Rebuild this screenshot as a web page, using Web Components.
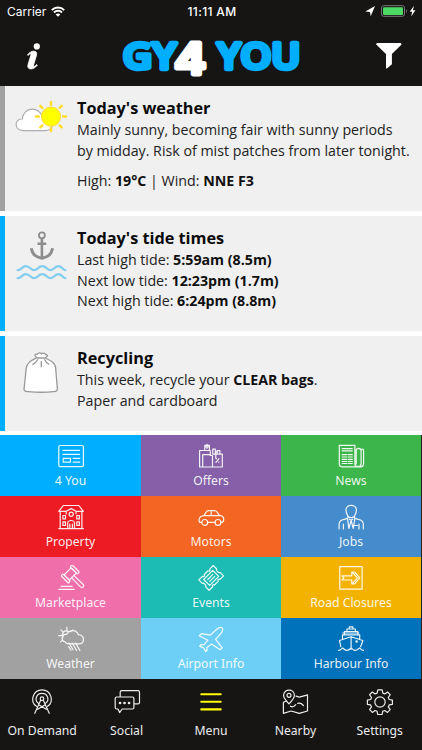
<!DOCTYPE html>
<html lang="en">
<head>
<meta charset="utf-8">
<title>GY4YOU</title>
<style>
html,body{margin:0;padding:0;background:#fff}
body{width:422px;height:750px;overflow:hidden;font-family:"Open Sans","Noto Sans",sans-serif}
</style>
</head>
<body>
<gy-app></gy-app>
<script>
const ICONS = {
  '4you': '<rect x="1.8" y="2.5" width="24.6" height="21.2" rx="1.4"/><path d="M6 7.4h16.5M6 11.4h16.5M16.2 15.4h6.5M16.2 19.2h6.5"/><rect x="6.2" y="15.3" width="7.3" height="3.8"/>',
  offers: '<path d="M2.6 24V7.5h10.7V12M2.6 24h22.7V11.2h-9.5M5.7 24V11.7h7.6M7.8 7.5V2.3h4.6v5.2M8 3.8h4.2M10 1.3v4M6 24h9.5V12.5h-2.2M15.5 12.5V24M15.7 11V6.2h2.6V11M18.3 8.2l1.8 1.2M20.2 11V7.6h2.7V11M18.8 11v4M18.9 19.4l3.1-3.8M19.1 15.7h.4M21.6 19.1h.4"/>',
  news: '<path d="M2.3 2.4h15.6v18.3c0 4 6 4 6.2 0V8c0-2.4 2.5-2.4 2.5 0v12.8c0 2-1.3 3-3 3H5c-1.8 0-2.7-1.1-2.7-2.7zM19.2 21V7.6c0-2.9 4.8-2.9 4.8 0"/><path d="M5.2 5.7h10M5.2 7.8h10M5.2 11.7h4.3M11 11.7h4.3M5.2 14h4.3M11 14h4.3M5.2 16.3h4.3M11 16.3h4.3M5.2 18.5h4.3M11 18.5h4.3M5.2 20.5h4.3M11 20.5h4.3"/>',
  property: '<path d="M6.3 1.5h15.5l4.6 5.8h-7.3L14.2 4.6 9.2 7.3H1.8zM3.2 7.3v17M24.9 7.3v17M1.8 24.6h24.6M9.2 7.3v2.5M19 7.3v2.5M10.7 24.5v-5c0-4 6.8-4 6.8 0v5M12.8 24.5v-4.3M15.4 24.5v-4.3"/><circle cx="14.2" cy="10.3" r="2.1"/><path d="M5.9 11.5h2.6v3.4H5.9zM19.8 11.5h2.6v3.4h-2.6zM5.9 17.8h2.6v3.6H5.9zM19.8 17.8h2.6v3.6h-2.6z"/>',
  motors: '<path d="M4.6 18.4H2.5c-1.5-4.4.8-6.3 4.4-6.8l2.4-3.7c.5-.9 1.2-1.2 2.1-1.2h6c1.2 0 2 .5 2.7 1.4l2.4 3.2c3.1.3 4.3 2 4.2 4.1 0 1.8-.9 3-2.6 3M10.7 18.4h7.2M6.9 11.6h15.5M14.2 6.9v4.7"/><circle cx="7.7" cy="18.4" r="2.9"/><circle cx="21" cy="18.4" r="2.9"/>',
  jobs: '<path d="M9 6c0-6.1 10.4-6.1 10.4 0 0 2.5-.6 3.6-1.3 4.8-.7 3.7-7.1 3.7-7.8 0C9.5 9.6 9 8.5 9 6zM2.1 24.9v-4.6c0-3.2 1.6-4.4 5-5l3.5-1 .7-2M26.3 24.9v-4.6c0-3.2-1.6-4.4-5-5l-3.5-1-.7-2M10.5 14.5l1.4 10 2.2-8.2 2.2 8.2 1.5-10M14.1 16.3l-1.6-1.1M14.1 16.3l1.6-1.1M6.4 20.2v4.7M22 20.2v4.7M17.6 21.5h3"/>',
  market: '<g transform="rotate(-45 13.2 9)"><rect x="8.2" y="5.3" width="10" height="7.4"/><rect x="5.4" y="3.8" width="2.8" height="10.4" rx="1"/><rect x="18.2" y="3.8" width="2.8" height="10.4" rx="1"/></g><path d="M17 10.6l9 8.6c1.8 1.9-.6 4.4-2.5 2.7l-8.8-9.1M4 21.3h11.2M1.8 24.4h15.3"/>',
  events: '<g transform="rotate(-45 14.2 12.9)"><path d="M4 5.6h5c.2 1.5 2.2 1.5 2.4 0h5.6c.2 1.5 2.2 1.5 2.4 0h5v4.9c-1.7.4-1.7 4.4 0 4.8v4.9h-5c-.2-1.5-2.2-1.5-2.4 0h-5.6c-.2-1.5-2.2-1.5-2.4 0H4v-4.9c1.7-.4 1.7-4.4 0-4.8z"/><path d="M7.8 8.7h12.8v8.4H7.8zM10.6 11.6h7.2M10.6 14.3h7.2"/></g>',
  road: '<rect x="2.8" y="1.7" width="22.3" height="22.4"/><path d="M5 10.8h9.8V7h2.8l5.2 5.9-5.2 5.9h-2.8V15H5l1.9-2.1zM15.5 7.3l4.9 5.6-4.9 5.6"/>',
  weather: '<path d="M8.2 16c-5-1.7-3.2-8.1 1.7-7.8 2.5-5 9.6-4.8 11.4.4 3 .1 5.4 2.2 5.2 5.1-.2 2.7-2.2 4.2-4.7 4.2h-9.6c-2.1 0-3.4-.6-4-1.9M6 11.2c-2-3.8 1.6-8.5 6-5.3M9.9 1.2v2.6M1.6 9.7h2.7M3.8 3.9l2.1 2M15.8 3.9l-1.9 1.6M5.2 14.5l-1.6 1.4M12 17l4 6.8M15.2 17l4.4 7.5M18.6 17l4.3 7.5M11.8 20.6l2.2 3.6"/>',
  airport: '<path d="M2.2 9.7l2.2-2.1 8.9 1.5 6.2-5.6c2.2-2 4.6-2.5 5.7-1.6 1 1.3.4 3.6-1.6 6l-5 5.5 6.6 8.4-1.9 1.9-9-5.6-4.6 3.7.4 2.4-1.5 1.3-2-3.6-4-1.8 1.5-1.6 2.8.3 4-4.6z"/>',
  harbour: '<path d="M3.8 20.7c-.4-2.6-.9-4-1.3-6.2L14 10.7l11.8 3.8c-.5 2.2-1.3 3.9-2.2 6.2M5.5 13.4V8.8h17.2v4.6M7.4 8.8V5.5h13.4v3.3M9.9 5.5V3h8.5v2.5M12.3 3V.9h3.6V3M14.1 10.7v12.5M1.5 24.3c2.2 0 3-1.4 4.2-2.4 1.1 1 2 2.4 4.2 2.4s3.1-1.4 4.2-2.4c1.2 1 2 2.4 4.2 2.4s3.2-1.4 4.3-2.4c1.1 1 1.8 2.4 4 2.4M5.8 7h16"/><circle cx="19.6" cy="15.5" r=".7"/>',
  demand: '<circle cx="14" cy="10.7" r="1.8"/><path d="M8 22.6L12.8 12M20 22.6L15.2 12M10.8 16.7l7.5 4.6M17.2 16.7l-7.5 4.6M6.8 25.3l1.2-2.7M21.2 25.3L20 22.6M10.7 15.5c-4.8-3.1-2.5-10.1 3.3-10.1s8.1 7 3.3 10.1M8.4 18.3C1.5 13.8 4.8 1.9 14 1.9s12.5 11.9 5.6 16.4"/>',
  social: '<path d="M7.2 8.7V4.2c0-.9.7-1.5 1.5-1.5H25c.9 0 1.5.6 1.5 1.5v10.2c0 .9-.6 1.5-1.5 1.5h-4M3.7 9h15.7c.9 0 1.5.6 1.5 1.5v9c0 .9-.6 1.5-1.5 1.5H9.2l-2.6 3.6L5 21H3.7c-.9 0-1.5-.6-1.5-1.5v-9c0-.9.6-1.5 1.5-1.5z"/><path d="M7 15h.1M11.5 15h.1M16 15h.1" stroke-width="2.6"/>',
  menu: '<path d="M4.3 6.2h19.4M4.3 13.8h19.4M4.3 21.4h19.4" stroke-width="2.1"/>',
  nearby: '<path d="M8 15.8C3.5 11 2.6 9.4 2.6 7.4c0-7 10.8-7 10.8 0 0 2-.9 3.6-5.4 8.4z"/><circle cx="8" cy="7.3" r="2"/><path d="M5 13.3l-2.6 1v11l7.8-2.3 8 2.3 8.3-2.3V6.8l-8.1 2.3-3.4-1M9.4 18.2c2.5 1.6 3.9.3 5.4-1.6M16.7 15.4c2.3-.6 4 .2 5.7 2.1"/>',
  settings: '<circle cx="14" cy="14" r="5.2"/><path d="M11.8 1.8h4.4l.6 3.3 2 .8L21.5 4l2.7 2.7-1.9 2.8.9 2 3.2.6v4.2l-3.2.6-.9 2 1.9 2.8-2.7 2.7-2.8-1.9-2 .8-.6 3.2h-4.4l-.6-3.2-2-.8-2.8 1.9-2.7-2.7 1.9-2.8-.9-2-3.2-.6v-4.2l3.2-.6.9-2-1.9-2.8L6.3 4l2.8 1.9 2-.8z"/>'
};

const CARD_ART = {
  sun: '<path d="M7.8 30.7C-1 30.3-1 18.7 7.2 19c1.3-12.6 17.4-13 19.7-2.3 5.7-.7 10.8 2 10.5 7-.2 4.6-3 7-7.5 7z" fill="#fff" stroke="#aaacb0" stroke-width="1.2"/><circle cx="36" cy="16.6" r="9.6" fill="#ff0" stroke="#ffd83c" stroke-width="1"/><path d="M36 4.8V2.1M36 31v-2.6M48.2 16.6h2.8M21 16.6h2.8M44.7 7.9l2-2M27.3 7.9l-2-2M44.7 25.3l2 2M27.3 25.3l-2 2" fill="none" stroke="#ffdc28" stroke-width="2.5" stroke-linecap="round"/>',
  anchor: '<g fill="none" stroke="#8d8d8d" stroke-width="1.8"><circle cx="26.9" cy="5.3" r="3"/><path d="M26.9 8.5v20M22.5 13.8h8.8" stroke-width="2.6"/><path d="M16.2 18.2c1.5 7 5 9 10.7 10 5.7-1 9.2-3 10.7-10" stroke-width="3"/></g><g fill="none" stroke="#83cdf0" stroke-width="2.2" stroke-linecap="round"><path d="M2.6 40.2c4.3 0 4.2-4 8-4 4.5 0 5.3 4 8.4 4 3.4 0 4.2-4 8.2-4 4.2 0 4.8 4 8.2 4s4.2-4 8-4c3.6 0 4 3.8 7 4"/><path d="M2.6 48.2c4.3 0 4.2-4 8-4 4.5 0 5.3 4 8.4 4 3.4 0 4.2-4 8.2-4 4.2 0 4.8 4 8.2 4s4.2-4 8-4c3.6 0 4 3.8 7 4"/></g>',
  bag: '<path d="M22 7.6l-2-2c-.5-1 1.2-1.7 2.4-1.4 1-2 3.4-1.5 4.2-.3 1.2-1.2 3.5-1 3.8.6 1.4-.2 2.6.8 1.8 1.7L30 8c5 2.2 10.3 4.7 10.7 10.2l1.5 19.3c.7 3.3-1 4-3.6 4.2-8.6.8-18 .6-25.6 0-3.2-.3-4.5-.9-3.8-4l2-19.3C11.8 12.2 17.5 10 22 7.6z" fill="#fff" stroke="#999" stroke-width="1.3"/><path d="M22.3 8h7.2M23 9.3c-1.4 2.5-3 4-5.6 5.3M26.3 11v6.3M29.3 9.3c1.2 2.3 2.6 3.9 5 5.2" fill="none" stroke="#999" stroke-width="1.3"/>'
};

class GyIcon extends HTMLElement {
  connectedCallback() {
    this.attachShadow({mode:'open'}).innerHTML = `<style>:host{display:block;width:28px;height:28px}svg{display:block;fill:none;stroke:currentColor;stroke-width:1.2;stroke-linejoin:round;stroke-linecap:round}</style><svg width="28" height="28" viewBox="0 0 28 28">${ICONS[this.getAttribute('name')]}</svg>`;
  }
}
customElements.define('gy-icon', GyIcon);

class GyHeader extends HTMLElement {
  connectedCallback() {
    this.attachShadow({mode:'open'}).innerHTML = `<style>
:host{display:block;height:86px;background:#161514;color:#fff}
.status{display:grid;grid-template-columns:1fr auto 1fr;align-items:center;height:22px;padding:0 5px 0 7px;font:12px Inter,"Liberation Sans",sans-serif}
.left,.right{display:flex;align-items:center}
.left{gap:5px}.time{font-weight:500;font-size:12px;letter-spacing:.35px}.right{justify-content:flex-end}
.nav{display:grid;grid-template-columns:66px 1fr 66px;height:64px}
svg{display:block}
</style>
<div class="status"><div class="left"><span>Carrier</span><svg width="14" height="11" viewBox="0 0 14 11" fill="none" stroke="#fff" stroke-width="1.9"><path d="M.8 4.1c3.4-3.5 9-3.5 12.4 0M3 6.5c2.2-2.3 5.8-2.3 8 0"/><path d="M7 10.8L4.7 8.5c1.2-1.2 3.4-1.2 4.6 0z" fill="#fff" stroke="none"/></svg></div>
<div class="time">11:11 AM</div>
<div class="right"><svg width="52" height="14" viewBox="0 0 52 14"><path d="M.3 7.4L10 2.1 5.7 12.2 5 7.9z" fill="#fff"/><rect x="16.5" y="1.7" width="23" height="10.6" rx="2.2" fill="none" stroke="#777"/><rect x="18" y="3.2" width="20" height="7.7" rx="1" fill="#4cd964"/><path d="M41 5.2c1.3.4 1.3 3.2 0 3.6z" fill="#777"/><path d="M49 1.8l-4.3 5.9h2.5l-1 4.7 4.2-6.1h-2.5z" fill="#fff"/></svg></div></div>
<div class="nav">
<svg width="66" height="64" viewBox="0 0 66 64" fill="#fff"><circle cx="36.8" cy="24.4" r="3.1"/><path stroke="#fff" stroke-width=".9" d="M27.5 33c2-2.7 4.2-3.8 6.2-3.8 2.8 0 3.4 1.7 2.7 4.2l-2.9 9.7c-.5 1.8.7 2 3.2-.5l.6.5c-2.1 2.8-4.4 3.8-6.4 3.8-2.7 0-3.6-1.7-2.8-4.4l2.7-9c.6-2.1-.7-2.2-2.7-.1z"/></svg>
<svg width="290" height="64" viewBox="66 22 290 64" font-family="Open Sans,Noto Sans,sans-serif" font-weight="600" stroke-width="4.4" stroke-linejoin="round" stroke-linecap="round"><g fill="#00aeff" stroke="#00aeff"><text x="122.8" y="68.7" font-size="35.5" textLength="53.5" lengthAdjust="spacingAndGlyphs">GY</text><text x="217.2" y="68.7" font-size="35.5" textLength="83.3" lengthAdjust="spacingAndGlyphs">YOU</text></g><text x="174.2" y="74" font-size="43" font-family="Inter,sans-serif" fill="#fff" stroke="#fff" stroke-width="4.8" textLength="32" lengthAdjust="spacingAndGlyphs">4</text></svg>
<svg width="66" height="64" viewBox="0 0 66 64"><path d="M21.3 21h23c1.1 0 1.5 1.2.8 2.1l-9.2 8.9v10.2l-5 4.2c-.3.2-.9 0-.9-.5v-13.9l-9.3-8.9c-.9-.9-.4-2.1.6-2.1z" fill="#fff"/></svg>
</div>`;
  }
}
customElements.define('gy-header', GyHeader);

class GyCard extends HTMLElement {
  connectedCallback() {
    this.attachShadow({mode:'open'}).innerHTML = `<style>
:host{display:grid;grid-template-columns:72px 1fr;box-sizing:border-box;background:#f0f0f0;border-left:5px solid var(--edge,#00aeff);color:#222}
svg{display:block;margin:14px 0 0 9.5px}
.copy{padding-top:11.4px;font-size:14.22px;line-height:20.4px;white-space:nowrap}
h2{margin:0;font-size:16.25px;line-height:23px;font-weight:700;color:#0b0b0b}
</style><svg width="54" height="50" viewBox="0 0 54 50">${CARD_ART[this.getAttribute('art')]}</svg><div class="copy"><h2>${this.getAttribute('heading')}</h2><slot></slot></div>`;
  }
}
customElements.define('gy-card', GyCard);

class GyTile extends HTMLElement {
  connectedCallback() {
    this.attachShadow({mode:'open'}).innerHTML = `<style>
:host{display:flex;flex-direction:column;align-items:center;color:rgba(255,255,255,.92);font:12.2px/18px "Noto Sans","Open Sans",sans-serif;padding-top:8px;box-sizing:border-box;white-space:nowrap}
span{margin-top:1px}
</style><gy-icon name="${this.getAttribute('icon')}"></gy-icon><span><slot></slot></span>`;
  }
}
customElements.define('gy-tile', GyTile);

class GyTab extends HTMLElement {
  connectedCallback() {
    this.attachShadow({mode:'open'}).innerHTML = `<style>
:host{display:flex;flex-direction:column;align-items:center;color:#ececec;font:12.2px/18px "Noto Sans","Open Sans",sans-serif;padding-top:9px;white-space:nowrap}
gy-icon{color:var(--tab-icon,#ececec)}span{margin-top:6px}
</style><gy-icon name="${this.getAttribute('icon')}"></gy-icon><span><slot></slot></span>`;
  }
}
customElements.define('gy-tab', GyTab);

class GyApp extends HTMLElement {
  connectedCallback() {
    const tiles = [['4you','4 You','#00aeff'],['offers','Offers','#8560a8'],['news','News','#3cb54a'],['property','Property','#ed1c24'],['motors','Motors','#f26522'],['jobs','Jobs','#448ccb'],['market','Marketplace','#f06eaa'],['events','Events','#1cbbb4'],['road','Road Closures','#f3b200'],['weather','Weather','#a1a1a1'],['airport','Airport Info','#6dcff6'],['harbour','Harbour Info','#0072bc']];
    const tabs = [['demand','On Demand'],['social','Social'],['menu','Menu'],['nearby','Nearby'],['settings','Settings']];
    this.attachShadow({mode:'open'}).innerHTML = `<style>
:host{display:flex;flex-direction:column;width:422px;height:750px;background:#fff}
.cards{display:grid;grid-template-rows:125px 115px 95px;row-gap:5px;height:349px}
.gap{margin-top:10px}
b{color:#111}
.tiles{display:grid;grid-template-columns:141px 140px 140px;grid-template-rows:repeat(4,61px);background:#222;height:244px}
.tabs{display:grid;grid-template-columns:repeat(5,84.4px);flex:1;background:#161514}
</style>
<gy-header></gy-header>
<div class="cards">
<gy-card art="sun" heading="Today's weather" style="--edge:#a1a1a1"><div>Mainly sunny, becoming fair with sunny periods</div><div>by midday. Risk of mist patches from later tonight.</div><div class="gap">High: <b>19°C</b> | Wind: <b>NNE F3</b></div></gy-card>
<gy-card art="anchor" heading="Today's tide times"><div>Last high tide: <b>5:59am (8.5m)</b></div><div>Next low tide: <b>12:23pm (1.7m)</b></div><div>Next high tide: <b>6:24pm (8.8m)</b></div></gy-card>
<gy-card art="bag" heading="Recycling"><div>This week, recycle your <b>CLEAR bags</b>.</div><div>Paper and cardboard</div></gy-card>
</div>
<div class="tiles">${tiles.map(t=>`<gy-tile icon="${t[0]}" style="background:${t[2]}">${t[1]}</gy-tile>`).join('')}</div>
<div class="tabs">${tabs.map(t=>`<gy-tab icon="${t[0]}"${t[0]==='menu'?' style="--tab-icon:#ff0"':''}>${t[1]}</gy-tab>`).join('')}</div>`;
  }
}
customElements.define('gy-app', GyApp);
</script>
</body>
</html>
